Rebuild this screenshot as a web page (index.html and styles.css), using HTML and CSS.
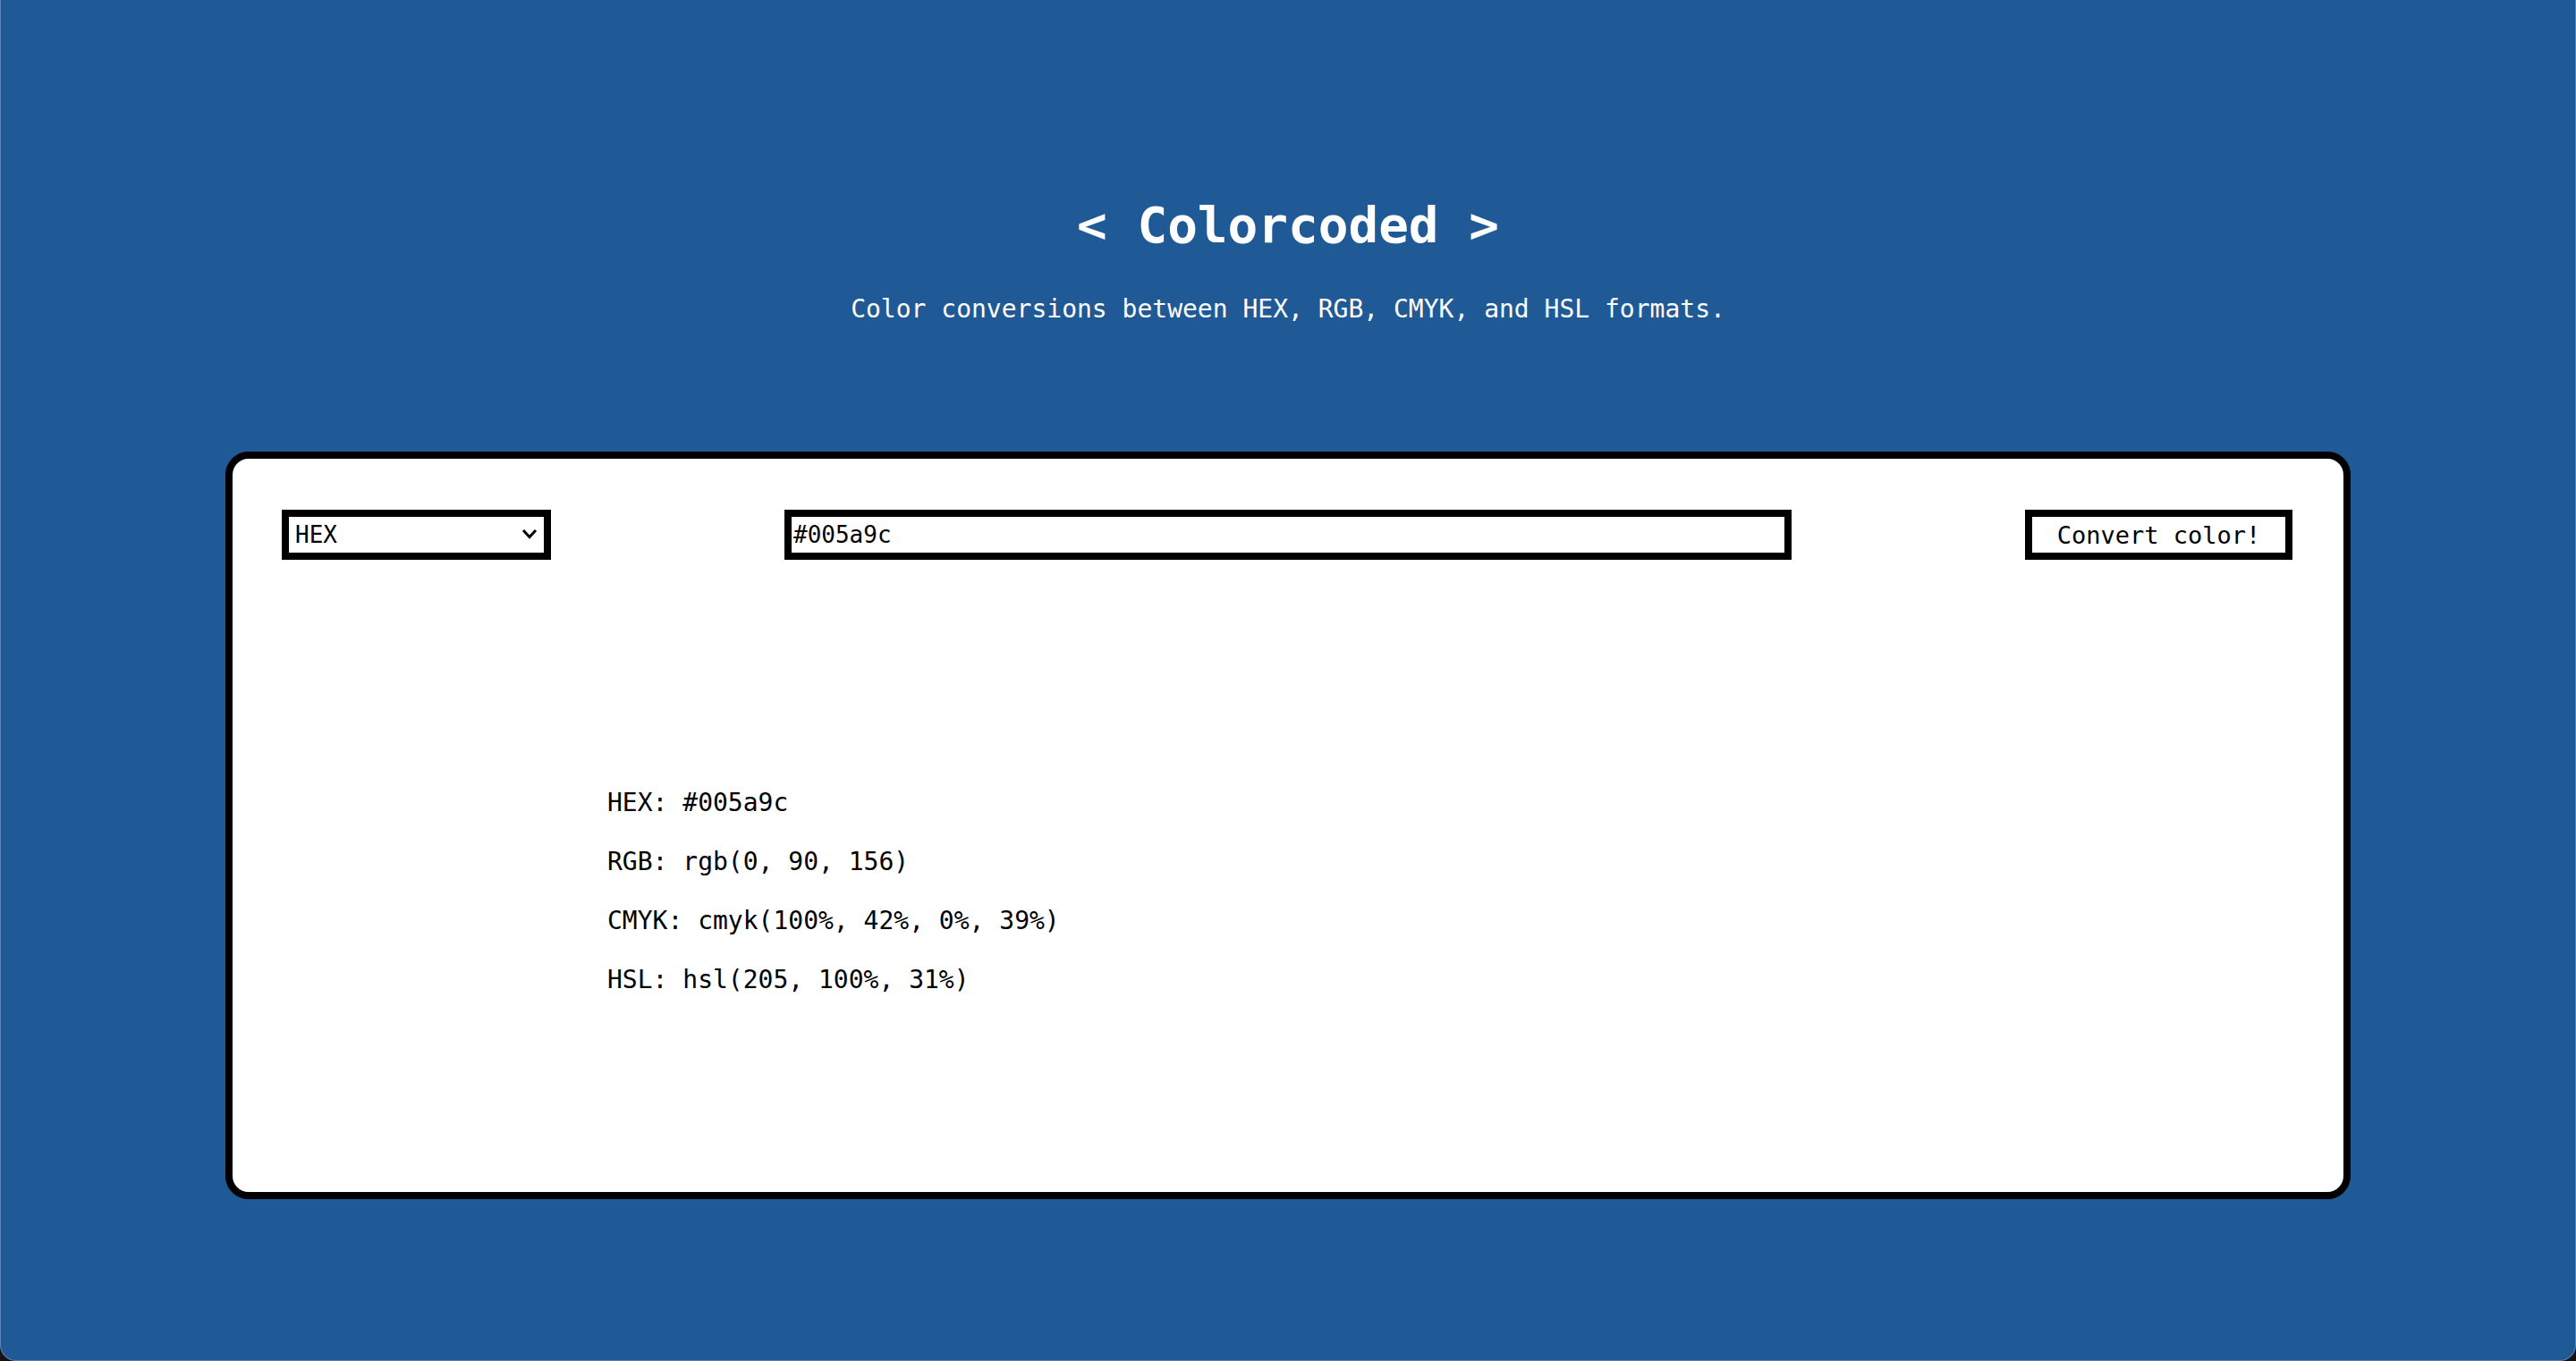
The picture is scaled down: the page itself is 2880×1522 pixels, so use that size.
FILE: index.html
```html
<!DOCTYPE html>
<html lang="en">
<head>
<meta charset="utf-8">
<title>Colorcoded</title>
<link rel="stylesheet" href="styles.css">
</head>
<body>
<div class="window">
  <header class="header">
    <h1 class="title">&lt; Colorcoded &gt;</h1>
    <p class="subtitle">Color conversions between HEX, RGB, CMYK, and HSL formats.</p>
  </header>
  <main class="card">
    <form class="controls">
      <div class="select-wrap">
        <select class="format">
          <option>HEX</option>
          <option>RGB</option>
          <option>CMYK</option>
          <option>HSL</option>
        </select>
        <svg class="chevron" width="18" height="12" viewBox="0 0 18 12" aria-hidden="true">
          <path d="M2 2 L9 9.5 L16 2" fill="none" stroke="#000" stroke-width="3"/>
        </svg>
      </div>
      <input class="color-input" type="text" value="#005a9c">
      <button class="convert" type="button">Convert color!</button>
    </form>
    <div class="results">
      <p class="result">HEX: #005a9c</p>
      <p class="result">RGB: rgb(0, 90, 156)</p>
      <p class="result">CMYK: cmyk(100%, 42%, 0%, 39%)</p>
      <p class="result">HSL: hsl(205, 100%, 31%)</p>
    </div>
  </main>
</div>
</body>
</html>
```
FILE: styles.css
```css
html {
  background: #141414;
}
body {
  margin: 0;
  font-family: "DejaVu Sans Mono", "Liberation Mono", monospace;
}
.window {
  box-sizing: border-box;
  height: 1522px;
  background: #205a96;
  border: 1px solid #5b83b1;
  border-top: none;
  border-radius: 0 0 18px 18px;
  color: #fff;
  display: flex;
  flex-direction: column;
  align-items: center;
}
.header {
  display: flex;
  flex-direction: column;
  align-items: center;
  padding-top: 218px;
}
.title {
  margin: 0;
  font-size: 56px;
  line-height: 67px;
  font-weight: 700;
}
.subtitle {
  margin: 44px 0 0;
  font-size: 28px;
  line-height: 34px;
}
.card {
  box-sizing: border-box;
  margin-top: 142px;
  width: 2376px;
  height: 836px;
  background: #fff;
  color: #000;
  border: 8px solid #000;
  border-radius: 26px;
  padding: 57px 57px 0 55px;
}
.controls {
  display: flex;
  justify-content: space-between;
  align-items: center;
  margin: 0;
}
.select-wrap {
  position: relative;
  width: 301px;
  height: 56px;
}
.format {
  box-sizing: border-box;
  appearance: none;
  -webkit-appearance: none;
  width: 100%;
  height: 56px;
  border: 8px solid #000;
  border-radius: 0;
  background: #fff;
  color: #000;
  font-family: "DejaVu Sans Mono", monospace;
  font-size: 26px;
  padding: 0 0 0 7px;
  margin: 0;
}
.chevron {
  position: absolute;
  right: 15px;
  top: 21px;
}
.color-input {
  box-sizing: border-box;
  width: 1126px;
  height: 56px;
  border: 8px solid #000;
  border-radius: 0;
  padding: 0 0 0 2px;
  margin: 0;
  font-family: "DejaVu Sans Mono", monospace;
  font-size: 26px;
  color: #000;
  outline: none;
}
.convert {
  box-sizing: border-box;
  width: 299px;
  height: 56px;
  border: 8px solid #000;
  border-radius: 0;
  background: #fff;
  color: #000;
  padding: 0;
  margin: 0;
  font-family: "DejaVu Sans Mono", monospace;
  font-size: 27px;
}
.results {
  display: flex;
  flex-direction: column;
  gap: 27px;
  margin: 252px 0 0 364px;
}
.result {
  margin: 0;
  font-size: 28px;
  line-height: 39px;
}
```
